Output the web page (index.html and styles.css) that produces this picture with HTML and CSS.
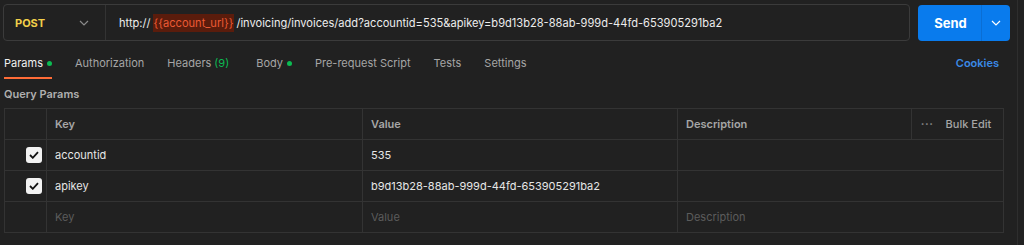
FILE: index.html
```html
<!DOCTYPE html>
<html lang="en">
<head>
  <meta charset="UTF-8" />
  <title>Request</title>
  <link rel="stylesheet" href="styles.css">
</head>
<body>
  <div class="panel">
    <div class="request">
      <div class="url-box">
        <div class="method">
          <span class="method-name">POST</span>
          <svg class="chev" width="10" height="6" viewBox="0 0 10 6"><path d="M1 1l4 4 4-4" stroke="#8a8a8a" stroke-width="1.2" fill="none"/></svg>
        </div>
        <div class="url">http://<span class="var">{{account_url}}</span>/invoicing/invoices/add?accountid=535&amp;apikey=b9d13b28-88ab-999d-44fd-653905291ba2</div>
      </div>
      <div class="send">
        <span class="send-label">Send</span>
        <span class="send-more">
          <svg width="10" height="6" viewBox="0 0 10 6"><path d="M1 1l4 4 4-4" stroke="#fff" stroke-width="1.2" fill="none"/></svg>
        </span>
      </div>
    </div>

    <div class="tabs">
      <div class="tab active">Params <i class="dot"></i></div>
      <div class="tab">Authorization</div>
      <div class="tab">Headers <span class="count">(9)</span></div>
      <div class="tab">Body <i class="dot"></i></div>
      <div class="tab">Pre-request Script</div>
      <div class="tab">Tests</div>
      <div class="tab">Settings</div>
      <div class="tab cookies">Cookies</div>
    </div>

    <div class="section-title">Query Params</div>

    <table class="params">
      <colgroup>
        <col class="c-check"><col class="c-key"><col class="c-value"><col class="c-desc"><col class="c-bulk">
      </colgroup>
      <tr class="head">
        <td></td>
        <td>Key</td>
        <td>Value</td>
        <td class="desc-head">Description</td>
        <td class="bulk"><span class="dots">•••</span>Bulk Edit</td>
      </tr>
      <tr>
        <td class="check"><span class="box"><svg width="10" height="8" viewBox="0 0 10 8"><path d="M1 4l2.8 2.8L9 1.2" stroke="#111" stroke-width="1.8" fill="none"/></svg></span></td>
        <td>accountid</td>
        <td>535</td>
        <td colspan="2"></td>
      </tr>
      <tr>
        <td class="check"><span class="box"><svg width="10" height="8" viewBox="0 0 10 8"><path d="M1 4l2.8 2.8L9 1.2" stroke="#111" stroke-width="1.8" fill="none"/></svg></span></td>
        <td>apikey</td>
        <td>b9d13b28-88ab-999d-44fd-653905291ba2</td>
        <td colspan="2"></td>
      </tr>
      <tr class="empty">
        <td></td>
        <td>Key</td>
        <td>Value</td>
        <td colspan="2">Description</td>
      </tr>
    </table>
  </div>
</body>
</html>
```

FILE: styles.css
```css
* {margin: 0; padding: 0; box-sizing: border-box;}
body {
  background: #212121;
  font-family: Inter, "Noto Sans", sans-serif;
  color: #e6e6e6;
  height: 245px;
  overflow: hidden;
}
.panel {
  width: 1018px;
  height: 245px;
  border-right: 1px solid #2e2e2e;
  padding: 4px 7px 0 3px;
}

.request {
  display: flex;
  align-items: center;
  gap: 8px;
}
.url-box {
  flex: 1;
  height: 37px;
  border: 1px solid #3b3b3b;
  border-radius: 4px;
  display: flex;
  align-items: center;
}
.method {
  width: 102px;
  height: 100%;
  display: flex;
  align-items: center;
  justify-content: space-between;
  padding: 0 16px 0 11px;
  border-right: 1px solid #333;
}
.method-name {
  color: #f2cf4a;
  font-weight: 700;
  font-size: 11px;
}
.url {
  padding-left: 13px;
  font-size: 11.1px;
  color: #ededed;
  white-space: nowrap;
}
.var {
  background: #5a1c0c;
  color: #ec5a35;
  padding: 2px 1px;
  margin: 0 2px;
}
.send {
  width: 92px;
  height: 36px;
  background: #097bed;
  border-radius: 4px;
  display: flex;
  align-items: center;
  color: #fff;
}
.send-label {
  width: 63px;
  text-align: center;
  font-weight: 700;
  font-size: 13px;
  padding-left: 2px;
}
.send-more {
  flex: 1;
  height: 100%;
  border-left: 1px solid #0a6ed4;
  display: flex;
  align-items: center;
  justify-content: center;
}

.tabs {
  display: flex;
  margin-top: 6px;
  padding-left: 1px;
  font-size: 11px;
}
.tab {
  color: #a6a6a6;
  line-height: 16px;
  padding: 8px 0 6px;
  margin-right: 23px;
  border-bottom: 2px solid transparent;
  display: flex;
  align-items: center;
  gap: 4px;
}
.tab.active {
  color: #f0f0f0;
  border-bottom-color: #ff6c37;
}
.tab .count {color: #0cbb52; margin-left: -1px; margin-right: 4px;}
.dot {
  width: 5px;
  height: 5px;
  border-radius: 50%;
  background: #0cbb52;
}
.tab.cookies {
  margin-left: auto;
  margin-right: 11px;
  color: #3b8ae6;
  font-weight: 600;
}

.section-title {
  margin: 7px 0 6px 1px;
  font-size: 11px;
  line-height: 16px;
  font-weight: 600;
  color: #b0b0b0;
}

.params {
  width: 999px;
  margin-left: 1px;
  border-collapse: collapse;
  table-layout: fixed;
  font-size: 11px;
}
.params td {
  border: 1px solid #333;
  height: 31px;
  padding: 0 8px;
  white-space: nowrap;
}
.c-check {width: 42px;}
.c-key {width: 316px;}
.c-value {width: 315px;}
.c-desc {width: 234px;}
.c-bulk {width: 92px;}
.head td {color: #a6a6a6; font-weight: 600;}
.params .bulk {
  font-weight: 500;
  padding-left: 9px;
}
.dots {
  font-size: 6px;
  letter-spacing: 1px;
  margin-right: 12px;
  vertical-align: 2px;
  color: #8a8a8a;
}
.check {text-align: right;}
.params td.check {padding: 0 4px 0 0;}
.box {
  display: inline-flex;
  width: 16px;
  height: 16px;
  border-radius: 3px;
  background: #f2f2f2;
  align-items: center;
  justify-content: center;
  vertical-align: middle;
}
.empty td {color: #5c5c5c;}
```
